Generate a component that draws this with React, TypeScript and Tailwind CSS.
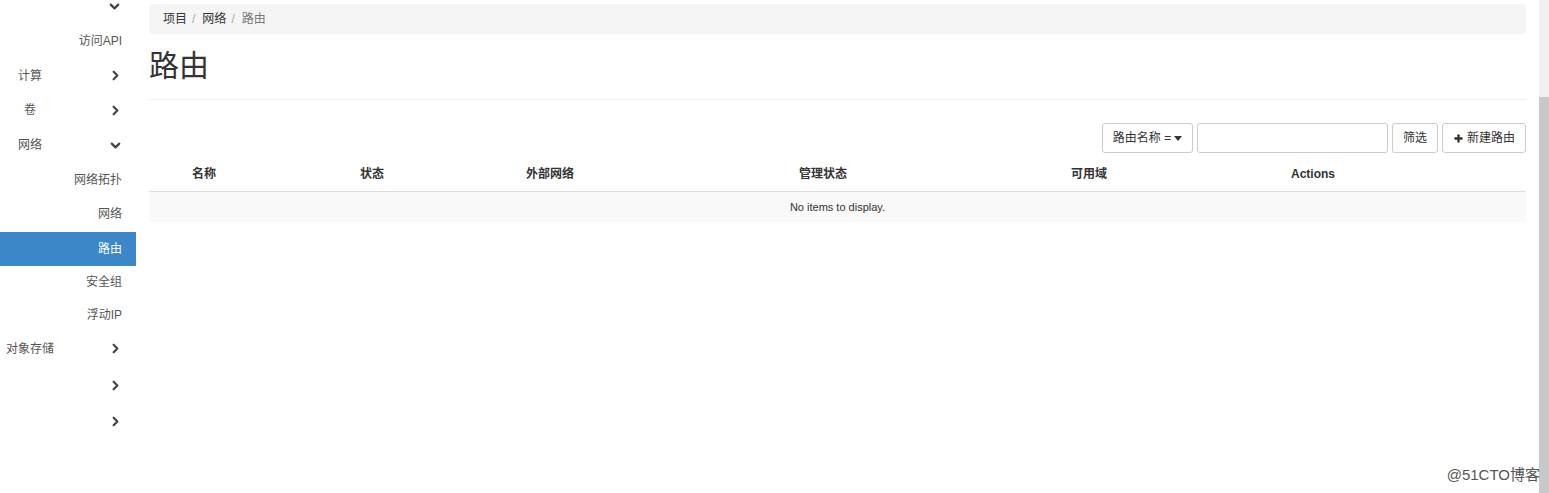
import { ChevronDown, ChevronRight, Plus } from "lucide-react";

const font = {
  fontFamily: '"Liberation Sans", "Noto Sans CJK SC", sans-serif',
};

type NavItem = {
  label: string;
  kind: "group" | "child";
  h: string;
  open?: boolean;
  active?: boolean;
};

const nav: NavItem[] = [
  { label: "访问API", kind: "child", h: "h-[34.6px]" },
  { label: "计算", kind: "group", h: "h-[34.6px]" },
  { label: "卷", kind: "group", h: "h-[34.6px]" },
  { label: "网络", kind: "group", h: "h-[34.6px]", open: true },
  { label: "网络拓扑", kind: "child", h: "h-[34.6px]" },
  { label: "网络", kind: "child", h: "h-[34.6px]" },
  { label: "路由", kind: "child", h: "h-[34.6px]", active: true },
  { label: "安全组", kind: "child", h: "h-[32.6px]" },
  { label: "浮动IP", kind: "child", h: "h-[32.6px]" },
  { label: "对象存储", kind: "group", h: "h-[34.6px]" },
  { label: "", kind: "group", h: "h-[38.6px]" },
  { label: "", kind: "group", h: "h-[34.6px]" },
];

const columns = ["名称", "状态", "外部网络", "管理状态", "可用域", "Actions"];

function Sidebar() {
  return (
    <div className="w-[136px] shrink-0 text-[12px] text-[#555]">
      <div className="flex h-[24px] items-start justify-end pr-[14px]">
        <ChevronDown size={15} strokeWidth={3.5} className="-mt-[1px] text-[#444]" />
      </div>
      {nav.map((item, i) =>
        item.kind === "group" ? (
          <div key={i} className={`flex ${item.h} items-center`}>
            <span className="w-[60px] text-center">{item.label}</span>
            <span className="ml-auto pr-[13px]">
              {item.open ? (
                <ChevronDown size={15} strokeWidth={3.5} className="text-[#444]" />
              ) : (
                <ChevronRight size={15} strokeWidth={3.5} className="text-[#444]" />
              )}
            </span>
          </div>
        ) : (
          <div
            key={i}
            className={
              item.active
                ? `flex ${item.h} items-center justify-end bg-[#3b87c8] pr-[14px] text-white`
                : `flex ${item.h} items-center justify-end pr-[14px]`
            }
          >
            {item.label}
          </div>
        )
      )}
    </div>
  );
}

export default function App() {
  return (
    <div className="relative flex h-[493px] w-[1549px] overflow-hidden bg-white text-[#333]" style={font}>
      <Sidebar />
      <div className="ml-[13px] flex w-[1377px] flex-col pt-[4px]">
        <div className="flex h-[30px] items-center gap-[5px] rounded-[3px] bg-[#f5f5f5] px-[14px] text-[12px]">
          <span className="text-[#333]">项目</span>
          <span className="text-[#aaa]">/</span>
          <span className="ml-[2px] text-[#333]">网络</span>
          <span className="text-[#aaa]">/</span>
          <span className="ml-[2px] text-[#777]">路由</span>
        </div>
        <h1 className="mt-[13px] text-[30px] leading-[38px] text-[#333]">路由</h1>
        <div className="mt-[14px] border-t border-[#eee]" />

        <div className="mt-[23px] flex justify-end gap-[4px] text-[12px]">
          <button className="flex h-[30px] w-[91px] items-center justify-center gap-[2px] rounded-[3px] border border-[#ccc] bg-white">
            路由名称 =
            <svg width="8" height="5" viewBox="0 0 8 5" className="ml-[1px]">
              <path d="M0 0 L8 0 L4 5 Z" fill="#333" />
            </svg>
          </button>
          <input className="h-[30px] w-[191px] rounded-[3px] border border-[#ccc] bg-white" />
          <button className="h-[30px] w-[46px] rounded-[3px] border border-[#ccc] bg-white">筛选</button>
          <button className="flex h-[30px] w-[84px] items-center justify-center gap-[3px] rounded-[3px] border border-[#ccc] bg-white">
            <Plus size={11} strokeWidth={5} className="text-[#333]" />
            新建路由
          </button>
        </div>

        <div className="mt-[3px] grid h-[36px] grid-cols-[168px_166px_273px_272px_220px_1fr] items-center border-b border-[#ddd] pl-[43px] text-[12px] font-bold text-[#333]">
          {columns.map((c) => (
            <span key={c}>{c}</span>
          ))}
        </div>
        <div className="flex h-[30px] items-center justify-center bg-[#f9f9f9] text-[11px] text-[#333]">
          No items to display.
        </div>
      </div>

      <div className="ml-auto flex w-[10px] flex-col">
        <div className="h-[97px] bg-[#f1f1f1]" />
        <div className="flex-1 bg-[#c8c8c8]" />
      </div>

      <div className="absolute bottom-[7px] right-[9px] text-[15px] text-[#555]">@51CTO博客</div>
    </div>
  );
}
